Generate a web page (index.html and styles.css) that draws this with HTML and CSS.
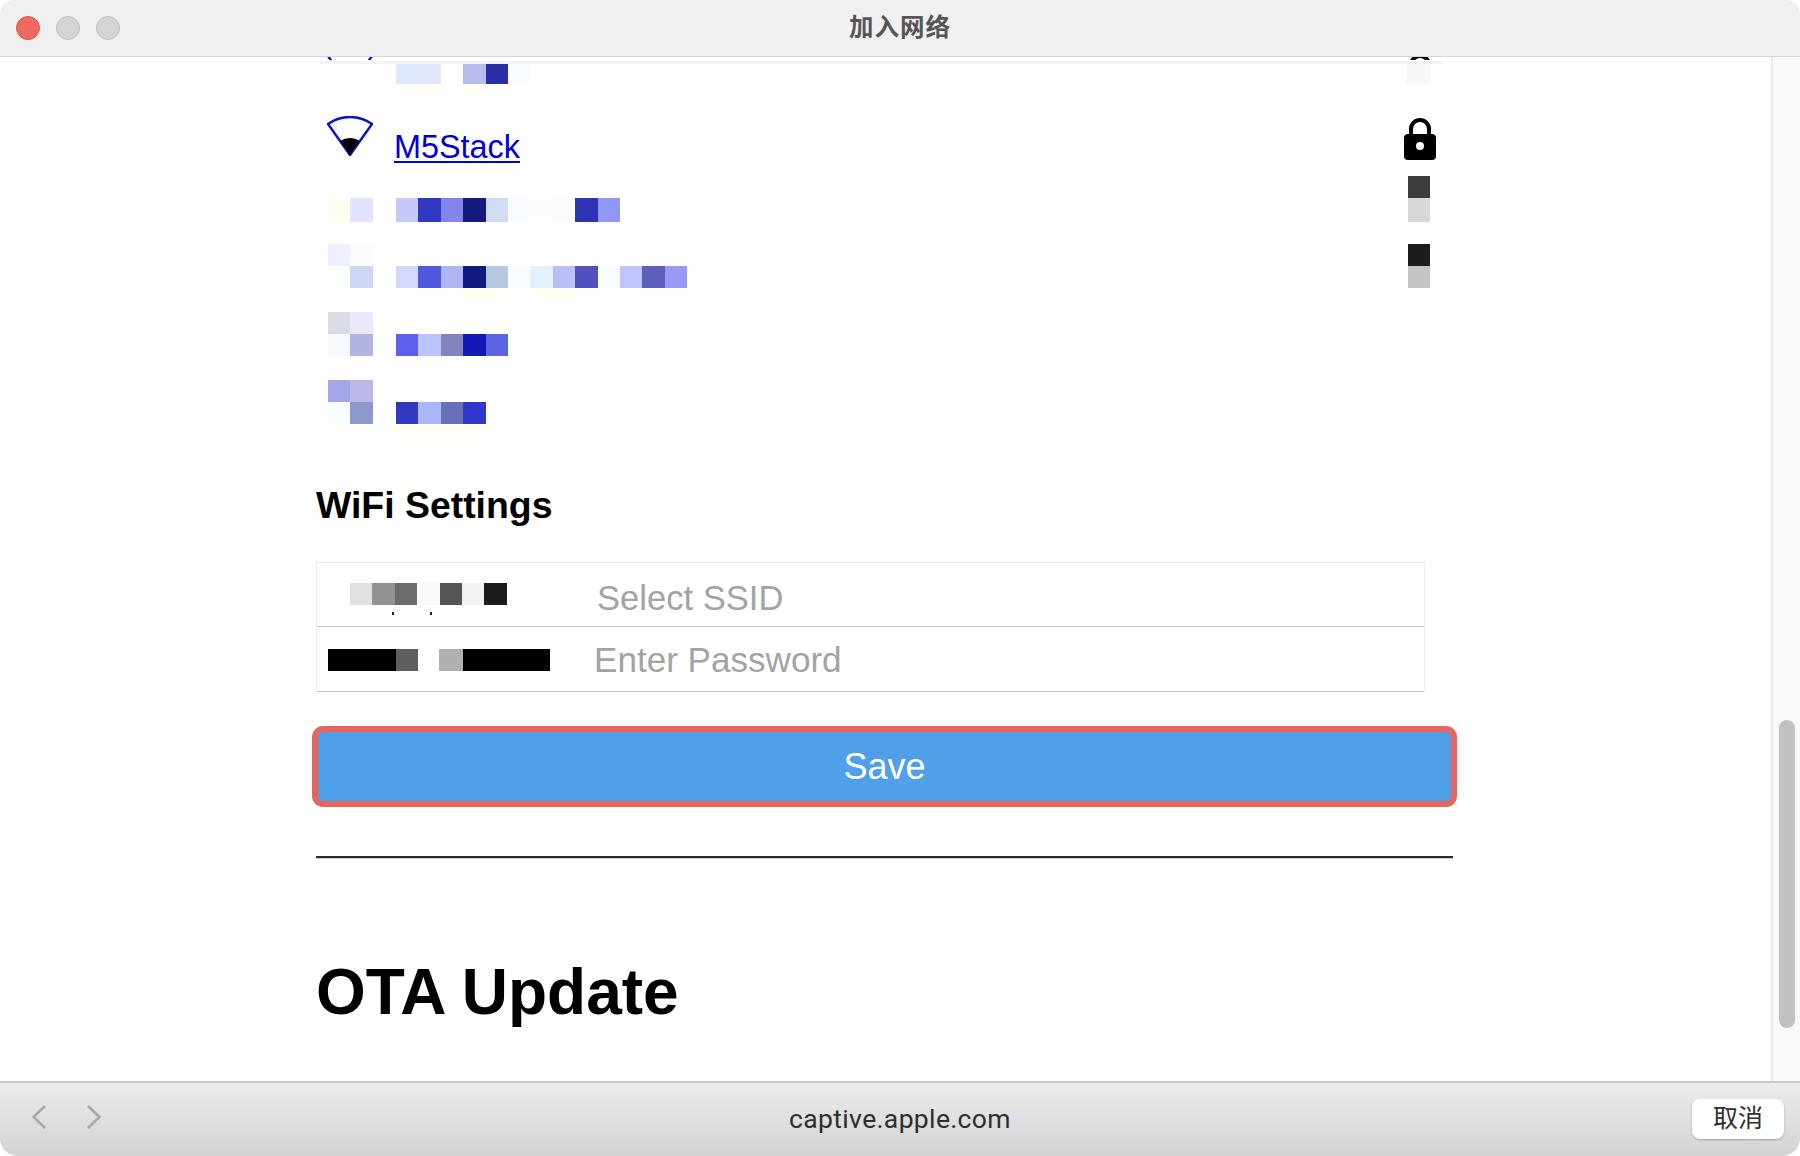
FILE: index.html
```html
<!DOCTYPE html>
<html lang="zh">
<head>
<meta charset="utf-8">
<title>加入网络</title>
<link rel="stylesheet" href="styles.css">
</head>
<body>
<div class="window">
  <header class="titlebar">
    <div class="lights"><span class="light red"></span><span class="light"></span><span class="light"></span></div>
    <h1 class="title">加入网络</h1>
  </header>
  <div class="viewport">
    <main class="page">
      <ul class="networks">
        <li class="net net-first">
          <div class="smear"></div>
          <div class="icon-col stub">
            <svg class="wifi" viewBox="0 0 48 40"><path class="fan" d="M24 39 L2 8 A38 38 0 0 1 46 8 Z"/></svg>
          </div>
          <div class="name-col">
            <div class="mosaic"><i class="cell f1"></i><i class="cell f2"></i><i class="cell"></i><i class="cell b1"></i><i class="cell b2"></i><i class="cell f3"></i></div>
            <div class="mosaic halo"><i class="cell"></i><i class="cell y1"></i><i class="cell"></i><i class="cell y1"></i></div>
          </div>
          <div class="status-col">
            <div class="lock-stub"><svg class="lock" viewBox="0 0 32 42"><path class="shackle" d="M7 18 V11 a9 9 0 0 1 18 0 V18"/></svg></div>
            <div class="ghost"></div>
          </div>
        </li>
        <li class="net">
          <div class="icon-col wifi-col">
            <svg class="wifi" viewBox="0 0 48 40"><path class="fan" d="M24 39 L2 8 A38 38 0 0 1 46 8 Z"/><path class="wedge" d="M24 39 L14.16 25.1 A17 17 0 0 1 33.84 25.1 Z"/></svg>
          </div>
          <div class="name-col named"><a class="ssid" href="#">M5Stack</a></div>
          <div class="status-col lock-col">
            <svg class="lock" viewBox="0 0 32 42"><rect class="body" x="0" y="16" width="32" height="26" rx="4"/><path class="shackle" d="M7 18 V11 a9 9 0 0 1 18 0 V18"/><circle class="hole" cx="16" cy="28" r="4"/></svg>
          </div>
        </li>
        <li class="net">
          <div class="icon-col">
            <div class="mosaic"><i class="cell i1"></i><i class="cell i2"></i></div>
            <div class="mosaic tall"><i class="cell i3"></i><i class="cell i4"></i></div>
          </div>
          <div class="name-col">
            <div class="mosaic tall"><i class="cell a1"></i><i class="cell a2"></i><i class="cell a3"></i><i class="cell a4"></i><i class="cell a5"></i><i class="cell f3"></i><i class="cell f4"></i><i class="cell f5"></i><i class="cell a6"></i><i class="cell a7"></i></div>
          </div>
          <div class="status-col">
            <div class="cell k1"></div>
            <div class="cell tall-cell k2"></div>
          </div>
        </li>
        <li class="net">
          <div class="icon-col">
            <div class="mosaic"><i class="cell j1"></i><i class="cell j2"></i></div>
            <div class="mosaic"><i class="cell j3"></i><i class="cell j4"></i></div>
          </div>
          <div class="name-col">
            <div class="mosaic"><i class="cell n1"></i><i class="cell n2"></i><i class="cell n3"></i><i class="cell n4"></i><i class="cell n5"></i><i class="cell f3"></i><i class="cell n6"></i><i class="cell n7"></i><i class="cell n8"></i><i class="cell f3"></i><i class="cell n9"></i><i class="cell n10"></i><i class="cell n11"></i></div>
            <div class="mosaic halo"><i class="cell"></i><i class="cell"></i><i class="cell"></i><i class="cell y1"></i><i class="cell y1"></i><i class="cell"></i><i class="cell y1"></i><i class="cell y1"></i></div>
          </div>
          <div class="status-col">
            <div class="cell k3"></div>
            <div class="cell k4"></div>
          </div>
        </li>
        <li class="net">
          <div class="icon-col">
            <div class="mosaic"><i class="cell l1"></i><i class="cell l2"></i></div>
            <div class="mosaic"><i class="cell l3"></i><i class="cell l4"></i></div>
          </div>
          <div class="name-col">
            <div class="mosaic"><i class="cell p1"></i><i class="cell p2"></i><i class="cell p3"></i><i class="cell p4"></i><i class="cell p5"></i></div>
          </div>
        </li>
        <li class="net">
          <div class="icon-col">
            <div class="mosaic"><i class="cell m1"></i><i class="cell m2"></i></div>
            <div class="mosaic"><i class="cell m3"></i><i class="cell m4"></i></div>
          </div>
          <div class="name-col">
            <div class="mosaic"><i class="cell q1"></i><i class="cell q2"></i><i class="cell q3"></i><i class="cell q4"></i></div>
            <div class="mosaic halo"><i class="cell y1"></i><i class="cell y1"></i><i class="cell y1"></i><i class="cell y1"></i></div>
          </div>
        </li>
      </ul>

      <h2 class="section">WiFi Settings</h2>
      <form class="fields">
        <div class="field">
          <div class="field-label">
            <div class="mosaic ssid-mask"><i class="cell g1"></i><i class="cell g2"></i><i class="cell g3"></i><i class="cell g4"></i><i class="cell g5"></i><i class="cell g6"></i><i class="cell g7"></i></div>
            <div class="dots"><b class="dot"></b><b class="dot"></b></div>
          </div>
          <input class="input input-ssid" type="text" placeholder="Select SSID">
        </div>
        <div class="field field-pass">
          <div class="field-label">
            <div class="mosaic pass-mask"><i class="bar bar-long"></i><i class="cell h1"></i><i class="cell h0"></i><i class="cell h2"></i><i class="bar bar-end"></i></div>
          </div>
          <input class="input input-pass" type="text" placeholder="Enter Password">
        </div>
      </form>
      <button class="save" type="button">Save</button>
      <hr class="rule">
      <h1 class="ota">OTA Update</h1>
    </main>
    <div class="scrollbar"><div class="thumb"></div></div>
  </div>
  <footer class="toolbar">
    <div class="nav">
      <svg class="chev" viewBox="0 0 14 24"><path d="M13 1 L1.5 12 L13 23"/></svg>
      <svg class="chev" viewBox="0 0 14 24"><path d="M1 1 L12.5 12 L1 23"/></svg>
    </div>
    <div class="address">captive.apple.com</div>
    <button class="cancel" type="button">取消</button>
  </footer>
</div>
</body>
</html>
```

FILE: styles.css
```css
* { box-sizing: border-box; }
html, body { margin: 0; height: 100%; background: #fff; }
body { font-family: "Liberation Sans", Arial, sans-serif; overflow: hidden; }

.window { height: 1156px; display: flex; flex-direction: column; border-radius: 14px 14px 18px 18px; overflow: hidden; }

/* title bar */
.titlebar { position: relative; height: 57px; flex: none; background: #f0f0f0; border-bottom: 1px solid #d6d6d6; display: flex; align-items: center; justify-content: center; }
.lights { position: absolute; left: 16px; top: 16px; display: flex; gap: 16px; }
.light { width: 24px; height: 24px; border-radius: 50%; background: #d5d5d5; border: 1px solid #bfbfbf; }
.light.red { background: #ee6a60; border-color: #e0574d; }
.title { margin: 0 0 4px; font: 700 24.5px/1 "Noto Sans CJK SC", sans-serif; color: #555; letter-spacing: 1px; }

/* scrolling area */
.viewport { flex: 1; min-height: 0; display: flex; overflow: hidden; }
.page { flex: 1; min-width: 0; padding-left: 316px; overflow: hidden; }
.scrollbar { width: 29px; flex: none; background: #f9f9f9; border-left: 2px solid #ececec; padding: 663px 6px 0 6px; }
.thumb { width: 16px; height: 308px; border-radius: 8px; background: #c1c1c1; }

/* network list */
.networks { list-style: none; margin: -29px 0 0; padding: 0; width: 1126px; }
.net { position: relative; height: 68px; display: flex; padding-left: 12px; }
.icon-col { width: 68px; flex: none; padding-top: 12px; }
.name-col { flex: 1; padding-top: 34px; }
.status-col { width: 38px; flex: none; padding: 12px 0 0 4px; }
.wifi-col { padding: 20px 0 0; margin-left: -2px; width: 70px; }
.lock-col { padding: 22px 0 0; }
.named { padding-top: 27px; margin-left: -2px; }
.stub { padding: 20px 0 0; margin-left: -2px; width: 70px; height: 32px; overflow: hidden; }
.lock-stub { height: 6px; margin-top: 16px; margin-left: -4px; overflow: hidden; }
.ghost { width: 24px; height: 20px; margin: 4px 0 0 -2px; background: #f7f7f7; }
.smear { position: absolute; left: 4px; right: 0; top: 33px; height: 3px; background: #f3f3f3; }
.net-first .status-col { padding-top: 10px; }

.wifi { display: block; width: 48px; height: 40px; }
.fan { fill: none; stroke: #0a12c8; stroke-width: 2.4; stroke-linejoin: round; }
.wedge { fill: #000; }
.lock { display: block; width: 32px; height: 42px; }
.body { fill: #000; }
.shackle { fill: none; stroke: #000; stroke-width: 4; }
.hole { fill: #fff; }

.ssid { font-size: 32.4px; line-height: 48px; color: #0000d8; text-decoration: underline; text-decoration-thickness: 2px; text-underline-offset: 3px; display: block; }

/* pixelated blocks */
.mosaic { display: flex; }
.halo .cell { height: 10px; }
.cell { display: block; width: 22.4px; height: 22px; flex: none; }
.tall .cell, .tall-cell { height: 24px; }
.bar { display: block; height: 22px; background: #000; flex: none; }
.bar-long { width: 68px; }
.bar-end { width: 87px; }

.y1 { background: #fefff0; }
.f1 { background: #e0e9fb; } .f2 { background: #e2e8fa; } .f3 { background: #f8fbff; } .f4 { background: #fcfcff; } .f5 { background: #fafaff; }
.b1 { background: #b8bcec; } .b2 { background: #2a2fa8; }
.i1 { background: #fbfdff; } .i2 { background: #fcfdff; } .i3 { background: #fcfff0; } .i4 { background: #e0e4fc; }
.a1 { background: #c4c8fb; } .a2 { background: #3038c4; } .a3 { background: #8384ec; } .a4 { background: #151a80; } .a5 { background: #d0dcf6; } .a6 { background: #2d35b4; } .a7 { background: #8f96f4; }
.j1 { background: #eef0ff; } .j2 { background: #f9fcfb; } .j3 { background: #fafff8; } .j4 { background: #cdd6f4; }
.n1 { background: #d4d8fa; } .n2 { background: #5058e0; } .n3 { background: #b0b4f4; } .n4 { background: #141a80; } .n5 { background: #b4c8e0; } .n6 { background: #e4f0fc; } .n7 { background: #b8c0f6; } .n8 { background: #5050c0; } .n9 { background: #c0c4fa; } .n10 { background: #5c60bc; } .n11 { background: #9a98f8; }
.l1 { background: #d8dce6; } .l2 { background: #ece8fb; } .l3 { background: #f6faff; } .l4 { background: #b4b4e4; }
.p1 { background: #6060f0; } .p2 { background: #bcc4fa; } .p3 { background: #8484bc; } .p4 { background: #1518b8; } .p5 { background: #5c64e4; }
.m1 { background: #a4a4e8; } .m2 { background: #bab8e4; } .m3 { background: #f6feff; } .m4 { background: #8c98cc; }
.q1 { background: #3038c0; } .q2 { background: #a8b8fa; } .q3 { background: #6870bc; } .q4 { background: #3038cc; }
.k1 { background: #3c3c3c; } .k2 { background: #d8d8d8; } .k3 { background: #1c1c1c; } .k4 { background: #c4c4c4; }
.g1 { background: #e0e0e0; } .g2 { background: #929292; } .g3 { background: #6b6b6b; } .g4 { background: #f9f9f9; } .g5 { background: #555; } .g6 { background: #f2f2f2; } .g7 { background: #1c1c1c; }
.h0 { width: 20.4px; }
.h1 { background: #5e5e5e; } .h2 { background: #b0b0b0; width: 24.4px; }

/* form */
.section { margin: 47px 0 35px; font-size: 37.4px; line-height: 44px; font-weight: 700; color: #000; }
.fields { width: 1109px; border: 1px solid #ececec; border-bottom: 0; }
.field { height: 64px; display: flex; border-bottom: 1px solid #c4c4c4; }
.field-pass { height: 65px; }
.field-label { position: relative; width: 278px; flex: none; }
.ssid-mask { margin: 20px 0 0 33px; }
.pass-mask { margin: 22px 0 0 11px; }
.dots { position: absolute; left: 75px; top: 49px; display: flex; gap: 36px; }
.dot { width: 2px; height: 3px; background: #222; }
.input { flex: 1; min-width: 0; border: 0; outline: 0; padding: 0; background: transparent; font: 400 34.6px/1 "Liberation Sans", sans-serif; color: #222; }
.input-ssid { padding: 8px 0 0 2px; }
.input-pass { margin-left: -1px; font-size: 35.1px; padding-top: 1px; }
.input::placeholder { color: #a3a3a3; opacity: 1; }

.save { display: block; width: 1145px; height: 81px; margin: 34px 0 0 -4px; border: 6px solid #e4665c; border-radius: 11px; background: #4fa0e8; color: #fff; font: 400 36px/1 "Liberation Sans", sans-serif; padding: 0; }

.rule { width: 1137px; height: 3px; margin: 49px 0 0; border: 0; border-top: 2px solid #2a2a2a; border-bottom: 1px solid #ccc; }
.ota { margin: 95px 0 0; font-size: 64px; line-height: 76px; font-weight: 700; color: #000; }

/* bottom toolbar */
.toolbar { position: relative; height: 75px; flex: none; display: flex; align-items: center; justify-content: center; border-top: 2px solid #cacaca; background: linear-gradient(#ececec, #d3d3d3); }
.nav { position: absolute; left: 32px; top: 22px; display: flex; gap: 41px; }
.chev { width: 14px; height: 24px; display: block; }
.chev path { fill: none; stroke: #a8a8a8; stroke-width: 2.6; }
.address { font: 400 26.5px/1 Roboto, sans-serif; color: #2e2e2e; letter-spacing: 0.35px; margin-top: -1px; }
.cancel { position: absolute; right: 16px; top: 16px; width: 92px; height: 40px; border: 0; border-radius: 8px; background: #fff; box-shadow: 0 1px 2px rgba(0,0,0,.25); font: 400 25px/1 "Noto Sans CJK SC", sans-serif; color: #2e2e2e; padding: 0 0 5px; }
```
